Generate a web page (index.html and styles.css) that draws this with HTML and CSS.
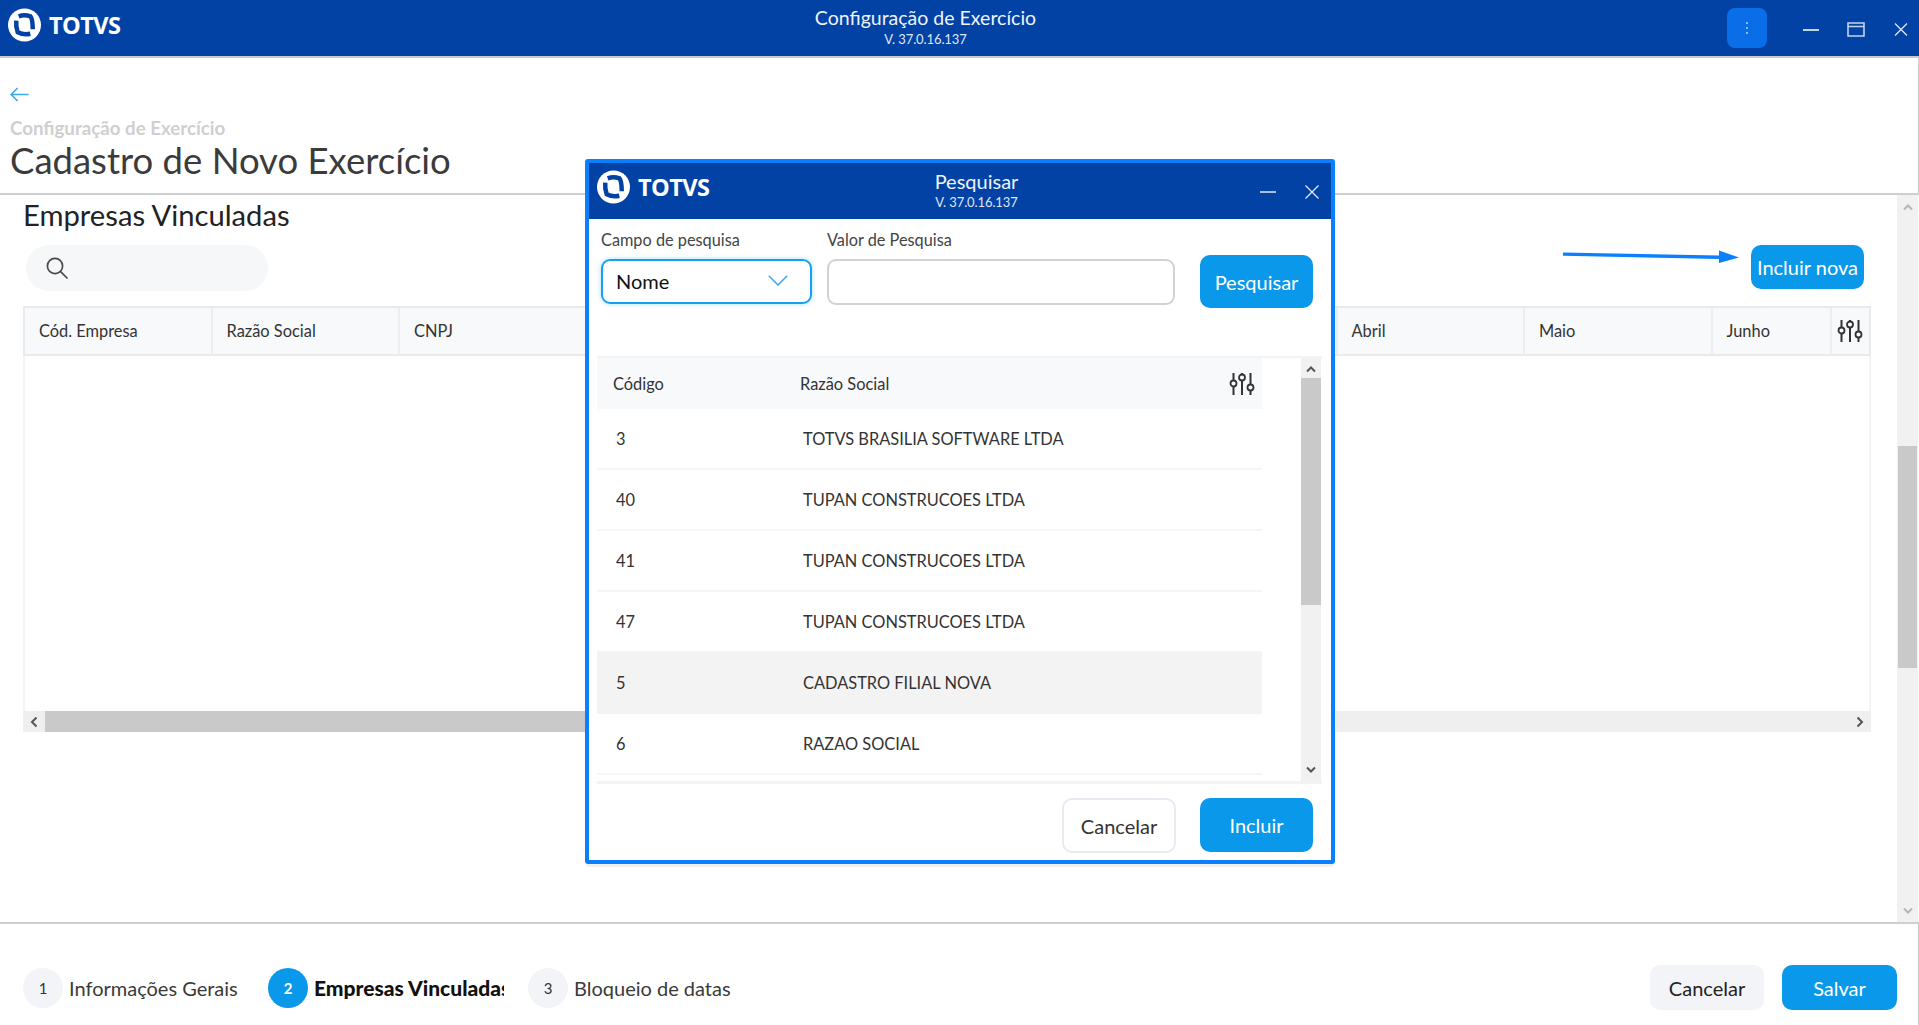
FILE: index.html
```html
<!DOCTYPE html>
<html lang="pt-BR">
<head>
<meta charset="utf-8">
<title>Configuração de Exercício</title>
<link rel="stylesheet" href="styles.css">
</head>
<body>
<header class="topbar">
  <div class="brand">
    <svg class="brand-mark" viewBox="0 0 34 34"><circle cx="17" cy="17" r="17" fill="#fff"/><path d="M11 8Q17 6 23 8Q25.500 11 25.500 21.500M8.500 12.500Q8 19 10 24.500Q16 27.500 23 26" fill="none" stroke="#0242a5" stroke-width="4.600"/></svg>
    <span class="brand-name">TOTVS</span>
  </div>
  <div class="app-title">
    <div class="app-name">Configuração de Exercício</div>
    <div class="app-version">V. 37.0.16.137</div>
  </div>
  <div class="window-actions">
    <button class="kebab" type="button"><svg viewBox="0 0 4 16" width="4" height="16"><circle cx="2" cy="3" r="1" fill="#b9d6fb"/><circle cx="2" cy="8" r="1" fill="#b9d6fb"/><circle cx="2" cy="13" r="1" fill="#b9d6fb"/></svg></button>
    <svg class="win-min" viewBox="0 0 16 2" width="16" height="2"><rect width="16" height="2" fill="#c3d3ec"/></svg>
    <svg class="win-max" viewBox="0 0 18 15" width="18" height="15"><path d="M1 1h16v13H1zM1 4.500h16" fill="none" stroke="#c3d3ec" stroke-width="1.600"/></svg>
    <svg class="win-close" viewBox="0 0 14 13" width="14" height="13"><path d="M1 .5l12 12M13 .5l-12 12" fill="none" stroke="#dfe7f5" stroke-width="1.300"/></svg>
  </div>
</header>

<section class="page-head">
  <svg class="back" viewBox="0 0 19 15" width="19" height="15"><path d="M18.500 7.500H1.200M7.600 1 1.200 7.500 7.600 14" fill="none" stroke="#3aa8ee" stroke-width="1.600"/></svg>
  <div class="crumb">Configuração de Exercício</div>
  <h1 class="page-title">Cadastro de Novo Exercício</h1>
</section>

<main class="content">
  <div class="content-main">
    <h2 class="section-title">Empresas Vinculadas</h2>
    <div class="toolbar">
      <div class="search">
        <svg viewBox="0 0 24 24" width="24" height="24"><circle cx="10" cy="10" r="7.600" fill="none" stroke="#4a4a4a" stroke-width="1.700"/><path d="M15.600 15.600 22.500 22.500" stroke="#4a4a4a" stroke-width="1.700"/></svg>
      </div>
      <button class="btn btn-primary btn-add" type="button">Incluir nova</button>
    </div>
    <div class="table">
      <div class="table-head">
        <div class="th">Cód. Empresa</div>
        <div class="th">Razão Social</div>
        <div class="th">CNPJ</div>
        <div class="th"></div>
        <div class="th"></div>
        <div class="th"></div>
        <div class="th"></div>
        <div class="th">Abril</div>
        <div class="th">Maio</div>
        <div class="th">Junho</div>
        <div class="th th-icon">
          <svg class="tune" viewBox="0 0 26 24" width="26" height="24"><path d="M4.500 1v7M4.500 15v8M13 1v1M13 9v14M21.500 1v11M21.500 19v4" stroke="#333" stroke-width="2" fill="none"/><circle cx="4.500" cy="11.500" r="3" fill="none" stroke="#333" stroke-width="1.800"/><circle cx="13" cy="5.500" r="3" fill="none" stroke="#333" stroke-width="1.800"/><circle cx="21.500" cy="15.500" r="3" fill="none" stroke="#333" stroke-width="1.800"/></svg>
        </div>
      </div>
      <div class="table-body"></div>
      <div class="hscroll">
        <span class="arrow-btn"><svg viewBox="0 0 8 12" width="8" height="12"><path d="M6.500 1.500 2 6l4.500 4.500" fill="none" stroke="#555" stroke-width="2"/></svg></span>
        <div class="hthumb"></div>
        <span class="arrow-btn"><svg viewBox="0 0 8 12" width="8" height="12"><path d="M1.500 1.500 6 6l-4.500 4.500" fill="none" stroke="#555" stroke-width="2"/></svg></span>
      </div>
    </div>
  </div>
  <div class="vscroll">
    <svg viewBox="0 0 12 8" width="12" height="8"><path d="M2 6.500 6 2.500l4 4" fill="none" stroke="#b5b5b5" stroke-width="2"/></svg>
    <div class="vthumb-wrap"><div class="vthumb"></div></div>
    <svg viewBox="0 0 12 8" width="12" height="8"><path d="M2 1.500 6 5.500l4-4" fill="none" stroke="#b5b5b5" stroke-width="2"/></svg>
  </div>
</main>

<footer class="footer">
  <div class="steps">
    <div class="step"><span class="step-num">1</span><span class="step-label">Informações Gerais</span></div>
    <div class="step step-active"><span class="step-num">2</span><span class="step-label">Empresas Vinculadas</span></div>
    <div class="step"><span class="step-num">3</span><span class="step-label">Bloqueio de datas</span></div>
  </div>
  <div class="footer-actions">
    <button class="btn btn-soft" type="button">Cancelar</button>
    <button class="btn btn-primary btn-save" type="button">Salvar</button>
  </div>
</footer>

<svg class="callout" viewBox="0 0 176 14" width="176" height="14"><path d="M0 2.400 156 5.600 156 .5 176 7.500 156 13 156 9 0 5.800Z" fill="#0a80ff"/></svg>

<div class="modal">
  <div class="modal-bar">
    <div class="brand">
      <svg class="brand-mark" viewBox="0 0 34 34"><circle cx="17" cy="17" r="17" fill="#fff"/><path d="M11 8Q17 6 23 8Q25.500 11 25.500 21.500M8.500 12.500Q8 19 10 24.500Q16 27.500 23 26" fill="none" stroke="#0242a5" stroke-width="4.600"/></svg>
      <span class="brand-name">TOTVS</span>
    </div>
    <div class="modal-title">
      <div class="modal-name">Pesquisar</div>
      <div class="app-version">V. 37.0.16.137</div>
    </div>
    <div class="modal-win">
      <svg viewBox="0 0 16 2" width="16" height="2"><rect width="16" height="2" fill="#a9bfe2"/></svg>
      <svg viewBox="0 0 14 14" width="14" height="14"><path d="M.5.500l13 13M13.500.500l-13 13" fill="none" stroke="#dfe7f5" stroke-width="1.300"/></svg>
    </div>
  </div>
  <div class="filters">
    <div class="field field-select">
      <label class="field-label">Campo de pesquisa</label>
      <div class="select"><span>Nome</span><svg viewBox="0 0 20 11" width="20" height="11"><path d="M.8.800 10 10 19.200.800" fill="none" stroke="#3aa8ee" stroke-width="1.500"/></svg></div>
    </div>
    <div class="field field-input">
      <label class="field-label">Valor de Pesquisa</label>
      <div class="input"></div>
    </div>
    <button class="btn btn-primary btn-search" type="button">Pesquisar</button>
  </div>
  <div class="grid">
    <div class="grid-list">
      <div class="grid-head">
        <span class="col-code">Código</span>
        <span class="col-name">Razão Social</span>
        <svg class="tune" viewBox="0 0 26 24" width="26" height="24"><path d="M4.500 1v7M4.500 15v8M13 1v1M13 9v14M21.500 1v11M21.500 19v4" stroke="#333" stroke-width="2" fill="none"/><circle cx="4.500" cy="11.500" r="3" fill="none" stroke="#333" stroke-width="1.800"/><circle cx="13" cy="5.500" r="3" fill="none" stroke="#333" stroke-width="1.800"/><circle cx="21.500" cy="15.500" r="3" fill="none" stroke="#333" stroke-width="1.800"/></svg>
      </div>
      <div class="row"><span class="cell-code">3</span><span class="cell-name">TOTVS BRASILIA SOFTWARE LTDA</span></div>
      <div class="row"><span class="cell-code">40</span><span class="cell-name">TUPAN CONSTRUCOES LTDA</span></div>
      <div class="row"><span class="cell-code">41</span><span class="cell-name">TUPAN CONSTRUCOES LTDA</span></div>
      <div class="row"><span class="cell-code">47</span><span class="cell-name">TUPAN CONSTRUCOES LTDA</span></div>
      <div class="row row-hover"><span class="cell-code">5</span><span class="cell-name">CADASTRO FILIAL NOVA</span></div>
      <div class="row"><span class="cell-code">6</span><span class="cell-name">RAZAO SOCIAL</span></div>
    </div>
    <div class="grid-scroll">
      <svg viewBox="0 0 12 8" width="12" height="8"><path d="M2 6.500 6 2.500l4 4" fill="none" stroke="#555" stroke-width="2"/></svg>
      <div class="grid-track"><div class="grid-thumb"></div></div>
      <svg viewBox="0 0 12 8" width="12" height="8"><path d="M2 1.500 6 5.500l4-4" fill="none" stroke="#555" stroke-width="2"/></svg>
    </div>
  </div>
  <div class="modal-foot">
    <button class="btn btn-outline" type="button">Cancelar</button>
    <button class="btn btn-primary btn-include" type="button">Incluir</button>
  </div>
</div>
</body>
</html>
```

FILE: styles.css
```css
* { box-sizing: border-box; }
html, body { height: 100%; }
body {
  margin: 0;
  height: 1025px;
  display: flex;
  flex-direction: column;
  overflow: hidden;
  background: #fff;
  color: #333;
  font-family: Lato, "Open Sans", sans-serif;
  position: relative;
}
button { font-family: inherit; cursor: pointer; }

.topbar {
  flex: 0 0 58px;
  display: flex;
  align-items: center;
  justify-content: space-between;
  background: #0242a5;
  border-bottom: 2px solid #c9c9c9;
  padding: 0 11px 0 8px;
  position: relative;
}
.topbar .brand { margin-bottom: 6px; }
.brand { display: flex; align-items: center; gap: 8px; }
.brand-mark { width: 33px; height: 34px; display: block; }
.brand-name {
  color: #fff;
  font-family: "Open Sans", sans-serif;
  font-weight: 700;
  font-size: 24px;
  line-height: 1;
  letter-spacing: -0.6px;
  transform: scaleX(.98);
  transform-origin: left;
}
.app-title {
  position: absolute;
  left: 0;
  right: 68px;
  top: 6px;
  text-align: center;
  color: #eef3fb;
}
.app-name { font-size: 19.5px; line-height: 24px; }
.app-version { font-size: 13px; line-height: 16px; letter-spacing: -.1px; margin-top: 1px; color: #dfe7f5; }
.window-actions { display: flex; align-items: center; gap: 0; position: relative; }
.kebab {
  width: 40px; height: 40px;
  border: 0; border-radius: 8px;
  background: #0a6ee8;
  display: flex; align-items: center; justify-content: center;
  padding: 0; margin-right: 36px;
}
.win-min { margin-right: 28px; margin-top: 3px; }
.win-max { margin-right: 29px; margin-top: 3px; }
.win-close { margin-top: 3px; }

.page-head {
  flex: 0 0 137px;
  border-bottom: 2px solid #cfcfcf;
  border-right: 1px solid #cfcfcf;
  padding: 29px 10px 0;
}
.back { display: block; }
.crumb {
  margin-top: 16px;
  font-size: 18.7px;
  line-height: 20px;
  font-weight: 700;
  color: #cfcfcf;
}
.page-title {
  margin: 2px 0 0;
  font-size: 36.5px;
  line-height: 40px;
  font-weight: 400;
  color: #3b3b3b;
}

.content { flex: 1; display: flex; min-height: 0; }
.content-main { flex: 1; padding: 0 26px 0 23px; min-width: 0; }
.section-title {
  margin: 0;
  padding-top: 2px;
  font-size: 29.2px;
  line-height: 36px;
  font-weight: 400;
  color: #222;
}
.toolbar {
  display: flex;
  justify-content: space-between;
  align-items: center;
  margin-top: 12px;
  padding: 0 7px 0 3px;
  height: 46px;
}
.search {
  width: 242px; height: 46px;
  border-radius: 23px;
  background: #f6f7f9;
  display: flex; align-items: center;
  padding-left: 19px;
}
.btn {
  border: 0;
  border-radius: 10px;
  height: 45px;
  width: 114px;
  font-size: 20px;
  padding: 0;
}
.btn-primary { background: #0a99ea; color: #fff; }
.btn-soft { background: #f3f4f8; color: #222; }
.btn-add { width: 113px; height: 44px; margin-top: -2px; }
.btn-save { width: 115px; }

.table { margin-top: 15px; display: flex; flex-direction: column; }
.table-head {
  display: grid;
  grid-template-columns: repeat(9, 187.5px) 119px 1fr;
  height: 50px;
  background: #f8f9fb;
  border: 2px solid #e8eaed;
}
.th {
  border-right: 2px solid #eceef1;
  padding: 0 0 1px 14px;
  display: flex;
  align-items: center;
  font-size: 16.4px;
  color: #333;
}
.th:last-child { border-right: 0; }
.th-icon { padding: 0; justify-content: center; }
.table-body {
  height: 355px;
  border-left: 2px solid #f4f4f4;
  border-right: 2px solid #f4f4f4;
}
.hscroll {
  height: 21px;
  display: flex;
  align-items: center;
  background: #efefef;
}
.arrow-btn { flex: 0 0 22px; display: flex; justify-content: center; }
.hthumb { flex: 0 0 560px; height: 100%; background: #c9c9c9; margin-right: auto; }

.vscroll {
  flex: 0 0 21px;
  margin-right: 1px;
  background: #f1f1f1;
  display: flex;
  flex-direction: column;
  align-items: center;
  padding: 8px 0 7px;
}
.vthumb-wrap { flex: 1; width: 100%; padding: 235px 1px 0; }
.vthumb { height: 222px; background: #c9c9c9; }

.footer {
  flex: 0 0 103px;
  border-top: 2px solid #cfcfcf;
  border-right: 1px solid #cfcfcf;
  display: flex;
  align-items: center;
  justify-content: space-between;
  padding: 26px 21px 0 23px;
}
.steps { display: flex; }
.step { display: flex; align-items: center; gap: 6px; font-size: 20px; color: #3a3a3a; }
.step:nth-child(1) { width: 245px; }
.step:nth-child(2) { width: 260px; }
.step-num {
  flex: 0 0 40px;
  height: 40px;
  border-radius: 50%;
  background: #f3f4f8;
  display: flex; align-items: center; justify-content: center;
  font-size: 15px;
  color: #333;
}
.step-active .step-num { background: #0a99ea; color: #fff; font-weight: 700; }
.step-active .step-label { font-size: 21px; font-weight: 900; color: #111; width: 190px; overflow: hidden; white-space: nowrap; }
.footer-actions { display: flex; gap: 18px; }

.callout { position: absolute; left: 1563px; top: 250px; }

.modal {
  position: absolute;
  left: 585px;
  top: 159px;
  width: 750px;
  height: 705px;
  background: #fff;
  border: 4px solid #0a80ff;
  border-radius: 3px;
  box-shadow: 0 4px 0 -1px #f0f0f0;
  display: flex;
  flex-direction: column;
}
.modal-bar {
  flex: 0 0 56px;
  background: #0242a5;
  display: flex;
  align-items: center;
  justify-content: space-between;
  padding: 0 12px 0 8px;
  position: relative;
}
.modal-bar .brand { margin-bottom: 8px; }
.modal-title {
  position: absolute; left: 0; right: 0; top: 6px;
  text-align: center; color: #eef3fb;
  margin-left: 33px;
}
.modal-name { font-size: 20px; line-height: 24px; }
.modal-win { display: flex; align-items: center; gap: 29px; margin-top: 2px; }
.filters {
  display: flex;
  padding: 0 13px 0 12px;
  height: 137px;
  align-items: flex-start;
}
.field-label { display: block; font-size: 16.3px; line-height: 20px; color: #444; margin-top: 11px; }
.field-select { width: 226px; }
.field-input { width: 373px; }
.select {
  margin-top: 9px;
  width: 211px;
  height: 45px;
  border: 2px solid #18a0ee;
  border-radius: 9px;
  box-shadow: 0 0 5px #a6dcfa;
  display: flex; align-items: center; justify-content: space-between;
  padding: 0 22px 2px 13px;
  font-size: 20px;
  color: #111;
}
.input {
  margin-top: 9px;
  width: 348px;
  height: 46px;
  border: 2px solid #d2d2d2;
  border-radius: 9px;
}
.btn-search { width: 113px; height: 53px; margin-top: 36px; }
.grid {
  margin: 0 9px 0 8px;
  height: 428px;
  border-top: 2px solid #f3f3f3;
  border-bottom: 3px solid #f3f3f3;
  display: flex;
  justify-content: space-between;
}
.grid-list { width: 665px; overflow: hidden; }
.grid-head {
  height: 51px;
  background: #f8f9fb;
  display: flex;
  align-items: center;
  font-size: 16.4px;
  color: #333;
  padding: 0 7px 0 16px;
}
.col-code { width: 187px; }
.col-name { flex: 1; }
.row {
  height: 61px;
  display: flex;
  align-items: center;
  padding-left: 19px;
  font-size: 16.4px;
  color: #333;
  border-bottom: 2px solid #f5f5f5;
}
.row-hover { background: #f3f3f3; border-bottom-color: #f3f3f3; }
.cell-code { width: 187px; }
.grid-scroll {
  width: 20px;
  margin-right: 1px;
  background: #f1f1f1;
  display: flex;
  flex-direction: column;
  align-items: center;
  padding: 7px 0;
}
.grid-track { flex: 1; width: 100%; padding-top: 5px; }
.grid-thumb { height: 227px; background: #c9c9c9; }
.modal-foot {
  flex: 1;
  display: flex;
  justify-content: flex-end;
  align-items: flex-start;
  gap: 24px;
  padding: 14px 18px 0 0;
}
.btn-outline { background: #fff; border: 2px solid #e7eaf0; color: #333; height: 55px; }
.btn-include { width: 113px; height: 54px; }
```
